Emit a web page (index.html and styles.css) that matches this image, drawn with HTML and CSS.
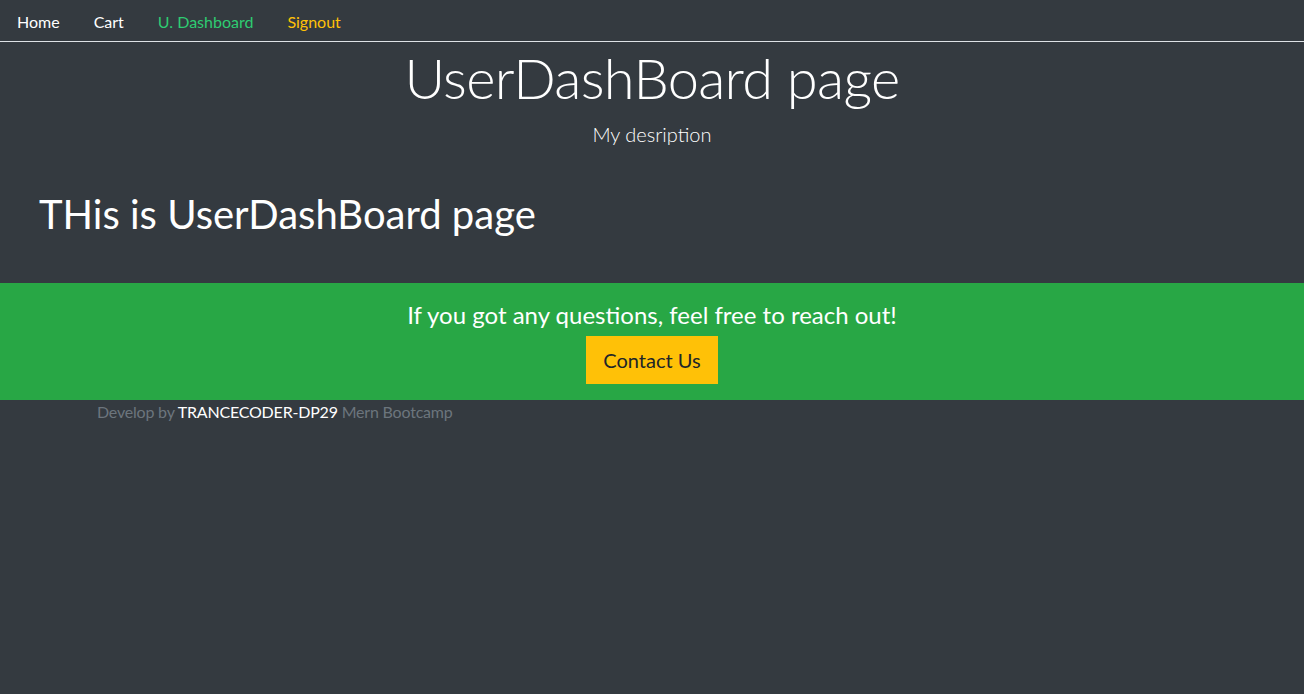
FILE: index.html
```html
<!DOCTYPE html>
<html lang="en">
<head>
<meta charset="utf-8">
<title>UserDashBoard</title>
<link rel="stylesheet" href="styles.css">
</head>
<body>
<div class="page">
  <ul class="nav">
    <li><a class="nav-link white" href="#">Home</a></li>
    <li><a class="nav-link white" href="#">Cart</a></li>
    <li><a class="nav-link active" href="#">U. Dashboard</a></li>
    <li><a class="nav-link warning" href="#">Signout</a></li>
  </ul>
  <div class="container-fluid">
    <div class="jumbotron">
      <h2 class="display">UserDashBoard page</h2>
      <p class="lead">My desription</p>
    </div>
    <div class="content">
      <h1 class="content-title">THis is UserDashBoard page</h1>
    </div>
  </div>
  <footer class="footer">
    <div class="contact">
      <h4 class="contact-title">If you got any questions, feel free to reach out!</h4>
      <button class="btn-contact">Contact Us</button>
    </div>
    <div class="container">
      <span class="muted">Develop by <span class="white-text">TRANCECODER-DP29</span> Mern Bootcamp</span>
    </div>
  </footer>
</div>
</body>
</html>
```

FILE: styles.css
```css
*, *::before, *::after {
  box-sizing: border-box;
}
html, body {
  margin: 0;
  padding: 0;
  height: 100%;
}
body {
  background: #343a40;
  font-family: "Lato", "Open Sans", sans-serif;
  font-size: 16px;
  line-height: 1.5;
  color: #212529;
}
.page {
  min-height: 100%;
  background: #343a40;
}
.nav {
  display: flex;
  list-style: none;
  margin: 0;
  padding: 0;
  border-bottom: 1px solid #dee2e6;
  background: #343a40;
}
.nav-link {
  display: block;
  padding: 10px 17px 7px;
  text-decoration: none;
  font-size: 16px;
  line-height: 24px;
}
.white { color: #ffffff; }
.active { color: #2ecc72; }
.warning { color: #ffc107; }
.container-fluid {
  padding: 0 15px;
}
.jumbotron {
  text-align: center;
  color: #fff;
  padding: 2px 0 2px;
}
.display {
  font-size: 56px;
  font-weight: 300;
  line-height: 1.2;
  letter-spacing: -0.7px;
  margin: 0 0 8px;
}
.lead {
  font-size: 20px;
  font-weight: 300;
  line-height: 1.5;
  margin: 0 0 16px;
}
.content {
  padding: 23px 24px 24px;
  color: #fff;
}
.content-title {
  font-size: 40px;
  font-weight: 400;
  line-height: 1.2;
  margin: 0 0 8px;
}
.footer {
  padding-top: 13px;
}
.contact {
  background: #28a745;
  color: #fff;
  text-align: center;
  padding: 16px 15px;
}
.contact-title {
  font-size: 24px;
  font-weight: 400;
  line-height: 1.2;
  padding-top: 2px;
  margin: 0 0 6px;
}
.btn-contact {
  font-family: inherit;
  background: #ffc107;
  border: 1px solid #ffc107;
  color: #212529;
  font-size: 20px;
  line-height: 1.5;
  padding: 8px 16px;
  border-radius: 0;
  cursor: pointer;
}
.container {
  max-width: 1140px;
  margin: 0 auto;
  padding: 0 15px;
}
.muted {
  color: #6c757d;
  letter-spacing: -0.2px;
}
.white-text {
  color: #fff;
}
```
